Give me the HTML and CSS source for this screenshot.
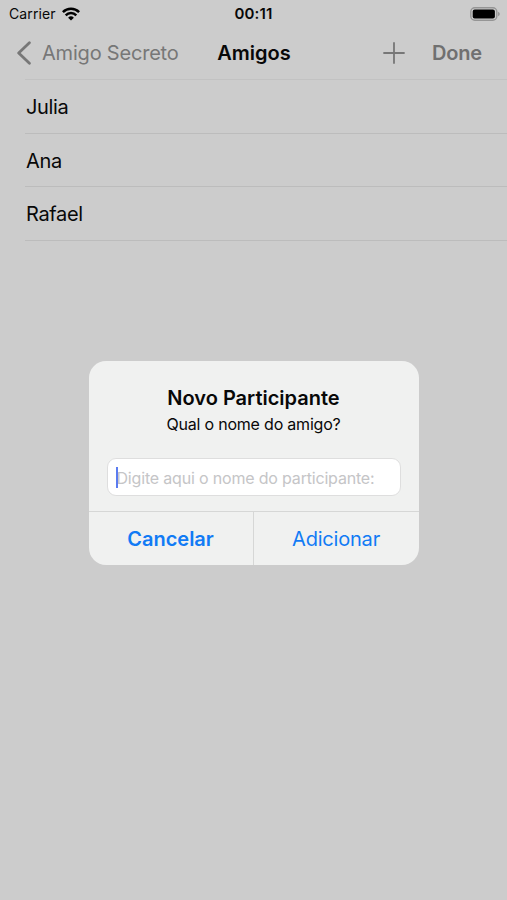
FILE: index.html
```html
<!DOCTYPE html>
<html lang="pt-BR">
<head>
    <meta charset="UTF-8">
    <meta name="viewport" content="width=device-width, initial-scale=1.0">
    <title>Amigos</title>
    <link rel="stylesheet" href="styles.css">
</head>
<body>
    <div class="screen">
        <div class="status-bar">
            <div class="carrier">
                <span>Carrier</span>
                <svg width="18" height="14" viewBox="0 0 18 14" fill="none" stroke="#000" stroke-width="2.5">
                    <path d="M0.9 5.2a11.5 11.5 0 0 1 16.2 0"/>
                    <path d="M3.7 8.3a7.5 7.5 0 0 1 10.6 0"/>
                    <path d="M9 13.4L6.1 10.7a4.1 4.1 0 0 1 5.8 0z" fill="#000" stroke="none"/>
                </svg>
            </div>
            <span class="time">00:11</span>
            <svg class="battery" width="30" height="14" viewBox="0 0 30 14">
                <rect x="0.8" y="0.7" width="26" height="12.6" rx="4" fill="none" stroke="#959595" stroke-width="1.4"/>
                <rect x="2.7" y="2.5" width="22.2" height="9" rx="2" fill="#000"/>
                <path d="M28.2 4.8v4.4q1.5-.7 1.5-2.2t-1.5-2.2z" fill="#8a8a8a"/>
            </svg>
        </div>
        <div class="nav-bar">
            <div class="back">
                <svg width="15" height="24" viewBox="0 0 15 24" fill="none" stroke="#777" stroke-width="2.8" stroke-linecap="round" stroke-linejoin="round">
                    <path d="M12.4 1.8L1.7 12l10.7 10.2"/>
                </svg>
                <span>Amigo Secreto</span>
            </div>
            <h1>Amigos</h1>
            <div class="actions">
                <svg width="22" height="22" viewBox="0 0 22 22" stroke="#777" stroke-width="1.8" stroke-linecap="round">
                    <path d="M11 1v20M1 11h20"/>
                </svg>
                <span class="done">Done</span>
            </div>
        </div>
        <ul class="friends">
            <li>Julia</li>
            <li>Ana</li>
            <li>Rafael</li>
        </ul>
        <div class="overlay">
            <div class="alert">
                <div class="alert-body">
                    <h2>Novo Participante</h2>
                    <p>Qual o nome do amigo?</p>
                    <div class="field">
                        <span class="placeholder">Digite aqui o nome do participante:</span>
                        <span class="caret"></span>
                    </div>
                </div>
                <div class="buttons">
                    <button class="cancel">Cancelar</button>
                    <button class="add">Adicionar</button>
                </div>
            </div>
        </div>
    </div>
</body>
</html>
```

FILE: styles.css
```css
* {
    margin: 0;
    padding: 0;
    box-sizing: border-box;
    font-family: Inter, "Liberation Sans", sans-serif;
}
body {
    background-color: #ccc;
    color: #080808;
}
.screen {
    position: relative;
    width: 507px;
    height: 900px;
    overflow: hidden;
    background-color: #ccc;
}
.status-bar {
    display: grid;
    grid-template-columns: 1fr auto 1fr;
    align-items: center;
    height: 27px;
    padding: 0 7px;
}
.carrier {
    display: flex;
    align-items: center;
    gap: 6px;
    padding-left: 2px;
    font-size: 14px;
    letter-spacing: 0.1px;
}
.time {
    font-size: 15px;
    font-weight: 600;
    letter-spacing: 0.1px;
}
.battery {
    justify-self: end;
}
.nav-bar {
    display: grid;
    grid-template-columns: 1fr auto 1fr;
    align-items: center;
    height: 52px;
    padding: 0 17px;
    font-size: 20px;
}
.back {
    display: flex;
    align-items: center;
    gap: 10px;
    color: #777;
    letter-spacing: -0.2px;
    white-space: nowrap;
}
.nav-bar h1 {
    font-size: 20px;
    font-weight: 600;
    text-indent: 1px;
}
.actions {
    display: flex;
    align-items: center;
    justify-content: flex-end;
    gap: 27px;
    padding-right: 8px;
}
.done {
    color: #707070;
    font-weight: 600;
    letter-spacing: -0.2px;
}
.friends {
    list-style: none;
    margin-left: 25px;
    border-top: 1px solid #c2c2c2;
}
.friends li {
    display: flex;
    align-items: center;
    height: 53.7px;
    padding: 1px 0 0 1px;
    border-bottom: 1px solid #bcbcbc;
    font-size: 20px;
    letter-spacing: -0.35px;
}
.overlay {
    position: absolute;
    inset: 0;
    display: flex;
    justify-content: center;
    padding-top: 361px;
}
.alert {
    display: flex;
    flex-direction: column;
    width: 330px;
    height: 204px;
    border-radius: 17px;
    background-color: #f0f1f0;
    overflow: hidden;
}
.alert-body {
    height: 150px;
    padding: 24px 18px 0;
    text-align: center;
}
.alert h2 {
    font-size: 20px;
    line-height: 26px;
    font-weight: 600;
    white-space: nowrap;
}
.alert p {
    font-size: 16px;
    line-height: 26px;
    letter-spacing: -0.2px;
}
.field {
    position: relative;
    display: flex;
    align-items: center;
    height: 38px;
    margin-top: 21px;
    padding: 1px 0 0 9px;
    border: 1px solid #dedede;
    border-radius: 9px;
    background-color: #fff;
}
.placeholder {
    color: #c5c5c7;
    font-size: 16px;
    letter-spacing: -0.18px;
    white-space: nowrap;
}
.caret {
    position: absolute;
    left: 8px;
    top: 8px;
    width: 2px;
    height: 21px;
    background-color: #5b7cf0;
}
.buttons {
    display: grid;
    grid-template-columns: 1fr 1fr;
    height: 54px;
    border-top: 1px solid #d6d7d6;
}
.buttons button {
    border: none;
    background: none;
    color: #117bf5;
    font-size: 20px;
    letter-spacing: -0.2px;
    cursor: pointer;
}
.buttons .cancel {
    border-right: 1px solid #d6d7d6;
    font-weight: 600;
    letter-spacing: 0;
}
```
